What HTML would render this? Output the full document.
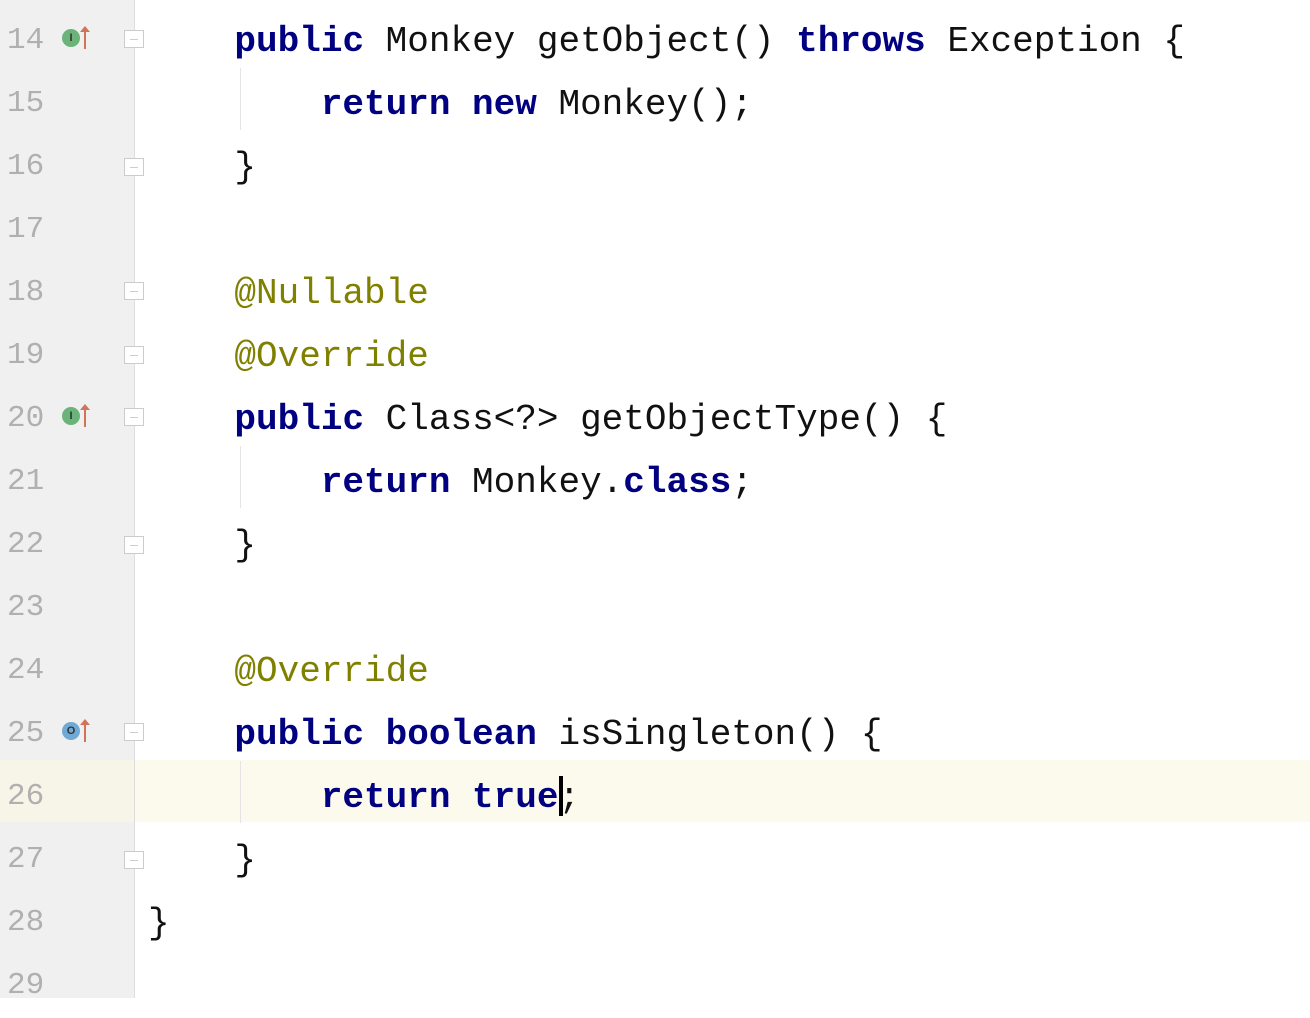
<!DOCTYPE html>
<html><head><meta charset="utf-8"><style>
body{margin:0;width:1310px;height:998px;overflow:hidden;background:#fff;position:relative;font-family:"Liberation Mono",monospace}
#gut{position:absolute;left:0;top:0;width:134px;height:998px;background:#f0f0f0;border-right:1px solid #ddd}
.hl{position:absolute;left:0;top:760px;width:1310px;height:62px;background:#fcfaed}
.ln{position:absolute;left:7px;font-size:31px;color:#b0b0b0;line-height:62.93px;height:62.93px}
.c{position:absolute;left:148px;font-size:36px;line-height:62.93px;white-space:pre;color:#111}
.k{color:#000080;font-weight:bold}
.a{color:#808000}
.fold{position:absolute;left:124px;width:20px;height:18px;border:1px solid #ccc;background:#fff;box-sizing:border-box}
.fold:after{content:"";position:absolute;left:5px;top:8px;width:8px;height:1px;background:#ccc}
.vg{position:absolute;left:240px;width:1px;background:#e4e4e4}
.ic{position:absolute;left:62px;width:18px;height:18px;border-radius:50%;font:bold 11px "Liberation Sans",sans-serif;text-align:center;line-height:18px;color:#333}
.ar{position:absolute;left:84px;width:2px;height:20px;background:#d0735a}
.ar:before{content:"";position:absolute;left:-4px;top:-3px;border:5px solid transparent;border-bottom:6px solid #d0735a;border-top:0}
</style></head><body>
<div class="hl"></div>
<div id="gut"></div>
<div class="hl" style="width:134px;background:#f7f5e8"></div>
<div class="ln" style="top:10px">14</div>
<div class="ln" style="top:73px">15</div>
<div class="ln" style="top:136px">16</div>
<div class="ln" style="top:199px">17</div>
<div class="ln" style="top:262px">18</div>
<div class="ln" style="top:325px">19</div>
<div class="ln" style="top:388px">20</div>
<div class="ln" style="top:451px">21</div>
<div class="ln" style="top:514px">22</div>
<div class="ln" style="top:577px">23</div>
<div class="ln" style="top:640px">24</div>
<div class="ln" style="top:703px">25</div>
<div class="ln" style="top:766px">26</div>
<div class="ln" style="top:829px">27</div>
<div class="ln" style="top:892px">28</div>
<div class="ln" style="top:955px">29</div>

<div class="ic" style="top:29px;background:#6ab47a">I</div><div class="ar" style="top:29px"></div>
<div class="ic" style="top:407px;background:#6ab47a">I</div><div class="ar" style="top:407px"></div>
<div class="ic" style="top:722px;background:#6fa9d6">O</div><div class="ar" style="top:722px"></div>

<div class="fold" style="top:30px"></div>
<div class="fold" style="top:158px"></div>
<div class="fold" style="top:282px"></div>
<div class="fold" style="top:346px"></div>
<div class="fold" style="top:408px"></div>
<div class="fold" style="top:536px"></div>
<div class="fold" style="top:723px"></div>
<div class="fold" style="top:851px"></div>

<div class="vg" style="top:68px;height:62px"></div>
<div class="vg" style="top:446px;height:62px"></div>
<div class="vg" style="top:761px;height:62px"></div>

<div class="c" style="top:11px">    <span class="k">public</span> Monkey getObject() <span class="k">throws</span> Exception {</div>
<div class="c" style="top:74px">        <span class="k">return new</span> Monkey();</div>
<div class="c" style="top:137px">    }</div>
<div class="c" style="top:263px">    <span class="a">@Nullable</span></div>
<div class="c" style="top:326px">    <span class="a">@Override</span></div>
<div class="c" style="top:389px">    <span class="k">public</span> Class&lt;?&gt; getObjectType() {</div>
<div class="c" style="top:452px">        <span class="k">return</span> Monkey.<span class="k">class</span>;</div>
<div class="c" style="top:515px">    }</div>
<div class="c" style="top:641px">    <span class="a">@Override</span></div>
<div class="c" style="top:704px">    <span class="k">public boolean</span> isSingleton() {</div>
<div class="c" style="top:767px">        <span class="k">return true</span>;</div>
<div style="position:absolute;left:559px;top:776px;width:4px;height:40px;background:#000"></div>
<div class="c" style="top:830px">    }</div>
<div class="c" style="top:893px">}</div>
</body></html>
